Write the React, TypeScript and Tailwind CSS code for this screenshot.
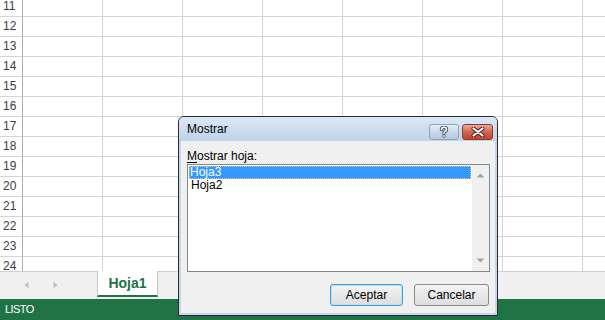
import React from "react";

const rows = [11, 12, 13, 14, 15, 16, 17, 18, 19, 20, 21, 22, 23, 24];
const cols = [0, 1, 2, 3, 4, 5, 6, 7];

function ListArrow({ up }: { up: boolean }) {
  return (
    <svg width="9" height="5" viewBox="0 0 9 5">
      {up ? <path d="M0.5 4.5 L4.5 0.5 L8.5 4.5 Z" fill="#a3a3a3" /> : <path d="M0.5 0.5 L4.5 4.5 L8.5 0.5 Z" fill="#a3a3a3" />}
    </svg>
  );
}

export default function App() {
  return (
    <div className="relative w-[605px] h-[320px] overflow-hidden bg-white" style={{ fontFamily: '"Liberation Sans", Arial, sans-serif' }}>
      {/* grid */}
      <div className="h-[271px] overflow-hidden">
        <div className="flex flex-col -mt-[3px]">
          {rows.map((r) => (
            <div key={r} className="flex h-[20px] flex-none">
              <div className="w-[23px] flex-none border-r border-r-[#ababab] border-b border-b-[#d4d4d4] text-[12px] leading-[19px] text-[#3c3c3c] pl-[3px]">
                {r}
              </div>
              {cols.map((c) => (
                <div key={c} className="w-[80px] flex-none border-r border-b border-[#d4d4d4]" />
              ))}
            </div>
          ))}
        </div>
      </div>
      {/* tab bar */}
      <div className="h-[28px] bg-[#f0f0f0] border-t border-[#d0d0d0] flex items-start relative">
        <div className="w-[97px] h-[26px] flex items-center">
          <svg className="ml-[24px]" width="5" height="8" viewBox="0 0 5 8">
            <path d="M4.5 0.5 L0.5 4 L4.5 7.5 Z" fill="#c2c2c2" />
          </svg>
          <svg className="ml-[24px]" width="5" height="8" viewBox="0 0 5 8">
            <path d="M0.5 0.5 L4.5 4 L0.5 7.5 Z" fill="#c2c2c2" />
          </svg>
        </div>
        <div className="-mt-[1px] w-[61px] h-[26px] bg-white border-l border-r border-[#c6c6c6] border-b-[2px] border-b-[#217346] flex items-center justify-center text-[14px] font-bold text-[#217346]">
          Hoja1
        </div>
      </div>
      {/* status bar */}
      <div className="h-[21px] bg-[#217346] flex items-center pl-[5px] text-white text-[11px] tracking-[-0.6px]">
        LISTO
      </div>

      {/* dialog */}
      <div className="absolute left-[178px] top-[116px] w-[320px] h-[200px] border border-[#2a2a2a] rounded-t-[6px] bg-[#c3d7ee] flex flex-col">
        <div className="h-[24px] flex-none flex items-center rounded-t-[5px] bg-gradient-to-b from-[#dce8f5] to-[#bed3ea]">
          <span className="ml-[8px] text-[12px] text-black">Mostrar</span>
          <div className="ml-auto mr-[4px] flex items-center gap-[3px] mt-[5px]">
            <div className="w-[30px] h-[16px] rounded-[3px] border border-[#8ea3bd] bg-gradient-to-b from-[#e6eef7] via-[#c9d8ea] to-[#b4c8e0] flex items-center justify-center">
              <svg width="10" height="12" viewBox="0 0 10 12">
                <path d="M2.5 3.5 Q2.5 1.2 5 1.2 Q7.5 1.2 7.5 3.4 Q7.5 4.8 5.8 5.6 Q5 6 5 7.3" fill="none" stroke="#3f5268" strokeWidth="3.4" strokeLinecap="round" />
                <circle cx="5" cy="10" r="1.7" fill="#3f5268" />
                <path d="M2.5 3.5 Q2.5 1.2 5 1.2 Q7.5 1.2 7.5 3.4 Q7.5 4.8 5.8 5.6 Q5 6 5 7.3" fill="none" stroke="#ffffff" strokeWidth="1.6" strokeLinecap="round" />
                <circle cx="5" cy="10" r="0.9" fill="#ffffff" />
              </svg>
            </div>
            <div className="w-[31px] h-[16px] rounded-[3px] border border-[#8b3a2e] bg-gradient-to-b from-[#e9a99b] via-[#d06650] to-[#c1432d] flex items-center justify-center">
              <svg width="14" height="10" viewBox="0 0 14 10">
                <path d="M2.5 1.5 L11.5 8.5 M11.5 1.5 L2.5 8.5" stroke="#4a1a12" strokeWidth="4" strokeLinecap="round" />
                <path d="M2.5 1.5 L11.5 8.5 M11.5 1.5 L2.5 8.5" stroke="#ffffff" strokeWidth="2.2" strokeLinecap="round" />
              </svg>
            </div>
          </div>
        </div>
        <div className="flex-1 mx-[2px] mb-[2px] bg-[#f0f0f0] flex flex-col px-[6px] pt-[8px]">
          <div className="text-[12px] leading-[14px] text-black">
            <span className="underline underline-offset-[2px]">M</span>ostrar hoja:
          </div>
          <div className="mt-[1px] w-[303px] h-[108px] border border-[#828790] bg-white flex">
            <div className="flex-1 pt-[1px] pl-[1px] pr-[1px] flex flex-col text-[12px]">
              <div className="h-[13px] bg-[#3399ff] text-white leading-[13px] pl-[1px] outline outline-1 outline-dotted outline-[#f2c08c] -outline-offset-1">
                Hoja3
              </div>
              <div className="h-[13px] text-black leading-[13px] pl-[2px]">Hoja2</div>
            </div>
            <div className="w-[17px] flex-none bg-[#f0f0f0] flex flex-col items-center justify-between py-[8px]">
              <ListArrow up />
              <ListArrow up={false} />
            </div>
          </div>
          <div className="flex justify-end gap-[11px] mt-[12px]">
            <div className="w-[73px] h-[22px] rounded-[3px] border border-[#3c9bd9] bg-gradient-to-b from-[#f4f4f4] to-[#dddddd] flex items-center justify-center text-[12px] text-black shadow-[inset_0_0_0_1px_#b8e0f8]">
              Aceptar
            </div>
            <div className="w-[75px] h-[22px] rounded-[3px] border border-[#8a8a8a] bg-gradient-to-b from-[#f4f4f4] to-[#dddddd] flex items-center justify-center text-[12px] text-black">
              Cancelar
            </div>
          </div>
        </div>
      </div>
    </div>
  );
}
